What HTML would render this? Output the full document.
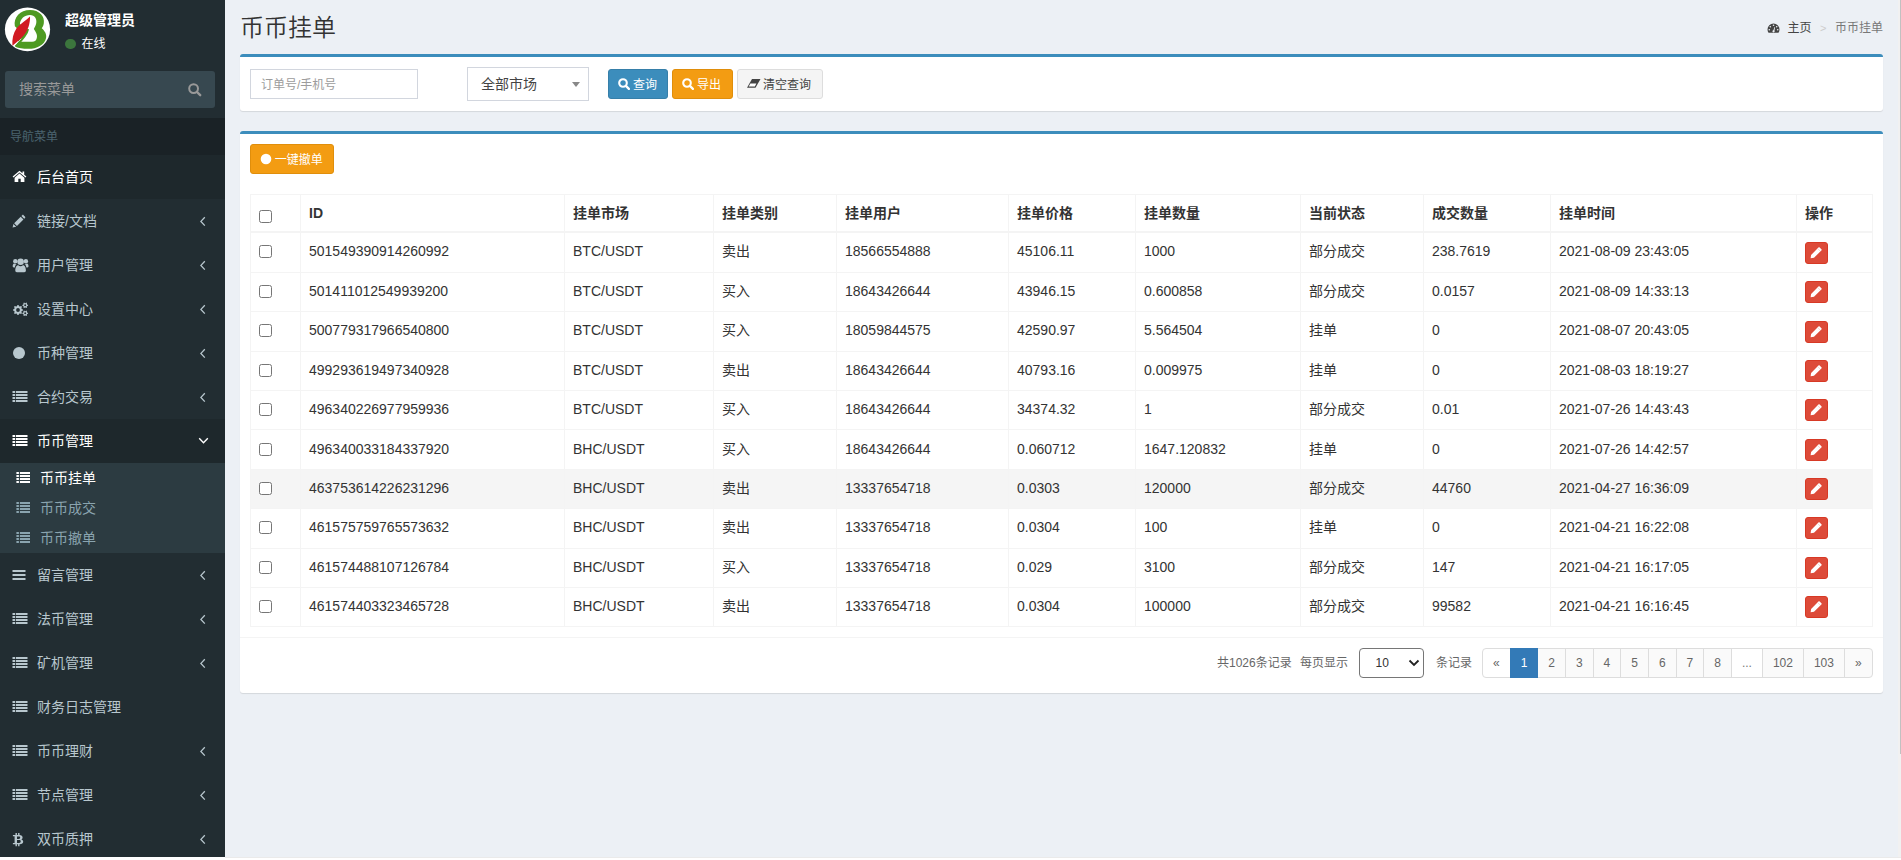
<!DOCTYPE html>
<html lang="zh-CN">
<head>
<meta charset="utf-8">
<title>币币挂单</title>
<style>
*{box-sizing:border-box;}
html,body{margin:0;padding:0;}
body{width:1901px;height:860px;overflow:hidden;background:#f0f0f0;position:relative;
 font-family:"Liberation Sans","Noto Sans CJK SC",sans-serif;font-size:14px;line-height:20px;color:#333;}
#frame{position:absolute;left:0;top:0;width:1898px;height:857px;background:#ecf0f5;overflow:hidden;}
#edge-r{position:absolute;left:1898px;top:0;width:3px;height:857px;background:#f1f1f1;}#thumb{position:absolute;left:1900px;top:0;width:1px;height:754px;background:#c1c1c1;}#seam{position:absolute;left:224px;top:0;width:2px;height:857px;border-left:1px solid #141c20;border-right:1px solid #fafcff;}
#edge-b{position:absolute;left:0;top:857px;width:1901px;height:3px;background:#fff;border-top:1px solid #eaeaea;}#edge-b i{position:absolute;left:0;top:-1px;width:225px;height:1px;background:#fff;}
/* sidebar */
#side{position:absolute;left:0;top:0;width:225px;height:857px;background:#222d32;color:#b8c7ce;}
#avatar{position:absolute;left:0;top:0;width:60px;height:60px;}
#uname{position:absolute;left:65px;top:10px;font-size:14px;font-weight:bold;color:#fff;line-height:20px;white-space:nowrap;}
#ustat{position:absolute;left:65px;top:36px;font-size:12px;color:#fff;line-height:16px;white-space:nowrap;}
#ustat i{display:inline-block;width:10.5px;height:10.5px;border-radius:50%;background:#3c763d;margin-right:6px;vertical-align:-1px;}
#search{position:absolute;left:5px;top:71px;width:210px;height:37px;border-radius:3px;background:#374850;}
#search span{position:absolute;left:14px;top:8px;font-size:14px;color:#999;line-height:20px;}
#search svg{position:absolute;left:183px;top:12px;}
#navhead{position:absolute;left:0;top:118px;width:225px;height:37px;background:#1a2226;color:#4b646f;font-size:12px;line-height:18px;padding:9.500px 0 0 10px;}
.mi{position:absolute;left:0;width:225px;height:44px;color:#b8c7ce;font-size:14px;}
.mi.on{background:#1e282c;color:#fff;}
.mi .t{position:absolute;left:37px;top:12px;line-height:20px;white-space:nowrap;}
.mi .ic{position:absolute;left:12px;top:14px;width:16px;height:16px;}
.mi .ar{position:absolute;left:199px;top:16px;width:8px;height:12px;}
#sub{position:absolute;left:0;top:463px;width:225px;height:90px;background:#2c3b41;}
.si{position:absolute;left:0;width:225px;height:30px;color:#8aa4af;font-size:14px;}
.si.on{color:#fff;}
.si .t{position:absolute;left:40px;top:5px;line-height:20px;white-space:nowrap;}
.si .ic{position:absolute;left:15.700px;top:7px;width:14.800px;height:14px;}
/* main */
h1{position:absolute;left:240px;top:10.500px;margin:0;font-size:24px;font-weight:350;line-height:34px;color:#333;white-space:nowrap;}
#crumb{position:absolute;left:1760px;top:19.200px;width:123px;height:18px;font-size:12px;line-height:18px;white-space:nowrap;}
#crumb span{position:absolute;top:0;}
.box{position:absolute;left:240px;width:1643px;background:#fff;border-top:3px solid #3c8dbc;border-radius:3px;box-shadow:0 1px 1px rgba(0,0,0,.1);}
#b1{top:54px;height:57px;}
#b2{top:131px;height:562px;}
.abs{position:absolute;}
#inp{left:250px;top:69px;width:168px;height:30px;border:1px solid #d2d6de;background:#fff;font-size:12px;line-height:18px;color:#9c9c9c;padding:5.500px 10px;}
#sel{left:467px;top:67px;width:122px;height:34px;border:1px solid #d2d6de;background:#fff;font-size:14px;line-height:20px;color:#444;padding:6px 0 0 13px;}
#sel i{position:absolute;left:104px;top:14px;width:0;height:0;border-left:4px solid transparent;border-right:4px solid transparent;border-top:5px solid #888;}
.btn{position:absolute;height:30px;border-radius:3px;font-size:12px;line-height:18px;color:#fff;border:1px solid transparent;white-space:nowrap;}
.btn span{position:absolute;top:5.600px;}
.btn svg{position:absolute;}
#bq{left:608px;top:69px;width:60px;background:#3c8dbc;border-color:#367fa9;}
#be{left:672px;top:69px;width:61px;background:#f39c12;border-color:#e08e0b;}
#bc{left:737px;top:69px;width:86px;background:#f4f4f4;border-color:#ddd;color:#444;}
#bx{left:250px;top:144px;width:84px;background:#f39c12;border-color:#e08e0b;}
/* table */
#tb{position:absolute;left:250px;top:194px;width:1622px;border-collapse:collapse;table-layout:fixed;font-size:14px;color:#333;}
#tb th,#tb td{border:1px solid #f4f4f4;padding:0 8px;text-align:left;vertical-align:middle;line-height:20px;white-space:nowrap;overflow:hidden;}
#tb th{font-weight:bold;border-bottom-width:2px;height:37.500px;padding-bottom:1px;}
#tb td{height:39.4px;padding-bottom:2px;}
#tb th.c{font-weight:700;}#tb tr.hv td{background:#f5f5f5;}#tb tr.r1 td{height:40.400px;}
.cb{display:block;width:13px;height:13px;border:1px solid #767676;border-radius:2.5px;background:#fff;margin:3px 0 0 0;position:relative;top:-1px;}
th .cb{margin-top:5px;top:1px;}
.eb{display:block;width:23px;height:22px;border-radius:3px;background:#dd4b39;border:1px solid #d73925;position:relative;margin-top:3px;}
.eb svg{position:absolute;left:5px;top:4px;}
#ftline{position:absolute;left:240px;top:637px;width:1643px;height:1px;background:#f4f4f4;}
.ft{position:absolute;top:654px;font-size:12px;line-height:18px;color:#666;white-space:nowrap;}
#psel{left:1359px;top:648px;width:65px;height:30px;border:1px solid #767676;border-radius:4px;background:#fff;font-size:12px;color:#333;line-height:18px;padding:5px 0 0 15.500px;}
#pag{position:absolute;left:1482px;top:648px;height:30px;display:flex;font-size:12px;line-height:18px;color:#666;}
#pag span{display:block;height:30px;border:1px solid #ddd;margin-left:-1px;background:#fafafa;text-align:center;padding-top:5px;}
#pag span:first-child{margin-left:0;border-radius:4px 0 0 4px;background:#fff;}
#pag span:last-child{border-radius:0 4px 4px 0;}
#pag span.on{background:#337ab7;border-color:#337ab7;color:#fff;position:relative;}
</style>
</head>
<body>
<div id="frame">
<div id="side">
 <div id="avatar"><svg width="60" height="60" viewBox="0 0 860 860"><ellipse cx="394" cy="422" rx="324" ry="313" fill="#fff"/><path d="M213 375C190 250 290 143 430 143C565 143 645 235 628 335C622 370 612 390 598 405C645 445 672 495 660 545C640 650 520 703 400 700C330 700 265 690 222 670L260 600L240 400Z" fill="#4e9a22"/><path d="M285 345C290 270 350 215 430 215C500 215 530 270 520 330C512 370 495 395 485 415C510 450 535 490 530 530C525 580 500 600 460 600L290 600L400 440Z" fill="#fff"/><path d="M402 418C392 480 340 550 222 668" fill="none" stroke="#4e9a22" stroke-width="30"/><path d="M305 555C270 590 235 625 198 662" fill="none" stroke="#fff" stroke-width="10"/><path d="M430 235C435 300 410 400 380 450C340 520 260 590 178 655C170 560 190 470 240 400C290 340 380 290 430 235Z" fill="#d11a22"/></svg></div>
 <div id="uname">超级管理员</div>
 <div id="ustat"><i></i>在线</div>
 <div id="search"><span>搜索菜单</span><svg width="14" height="14" viewBox="0 0 14 14"><circle cx="5.6" cy="5.6" r="4.4" fill="none" stroke="#999" stroke-width="2"/><path d="M9 9L12.2 12.2" stroke="#999" stroke-width="2.4" stroke-linecap="round"/></svg></div>
 <div id="navhead">导航菜单</div>
 <div class="mi on" style="top:155px"><svg class="ic" viewBox="0 0 16 16"><path d="M7.500 1.800L.6 7.600l.9 1L7.500 3.600l6 5 .9-1-2.200-1.900V2.500h-1.700v1.800z" fill="#fff"/><path d="M7.500 4.600L2.600 8.700V13h3.700V9.800h2.400V13h3.700V8.700z" fill="#fff"/></svg><span class="t">后台首页</span></div>
 <div class="mi" style="top:199px"><svg class="ic" viewBox="0 0 16 16"><path transform="translate(.3 1.400) scale(.93)" d="M.3 14.200l.9-3.900 3 3zM2 9.500l7-7 3 3-7 7zM9.800 1.700l.9-.9c.4-.4 1-.4 1.400 0l1.600 1.600c.4.400.4 1 0 1.400l-.9.900z" fill="#b8c7ce"/></svg><span class="t">链接/文档</span><svg class="ar" viewBox="0 0 8 12"><path d="M5.800 2.200L1.900 6.400l3.900 4.200" fill="none" stroke="#b8c7ce" stroke-width="1.300"/></svg></div>
 <div class="mi" style="top:243px"><svg class="ic" viewBox="0 0 16 16" style="overflow:visible"><circle cx="8.600" cy="4.800" r="3.300" fill="#b8c7ce"/><path d="M4.900 15.200c-1 0-1.600-.6-1.600-1.600 0-2.600.8-5.300 3-5.300.6.600 1.400.9 2.300.9s1.700-.3 2.300-.9c2.200 0 3 2.700 3 5.300 0 1-.6 1.600-1.600 1.600z" fill="#b8c7ce"/><circle cx="3.300" cy="4.300" r="2.200" fill="#b8c7ce"/><circle cx="13.900" cy="4.300" r="2.200" fill="#b8c7ce"/><path d="M.7 9.600c0-1.600.4-3 1.600-3 .6.500 1.400.7 2.200.5-.9.800-1.500 1.900-1.700 3.300H1.700c-.6 0-1-.3-1-.8zM16.500 9.600c0-1.600-.4-3-1.600-3-.6.500-1.400.7-2.200.5.900.8 1.500 1.900 1.700 3.300h1.100c.6 0 1-.3 1-.8z" fill="#b8c7ce"/></svg><span class="t">用户管理</span><svg class="ar" viewBox="0 0 8 12"><path d="M5.800 2.200L1.900 6.400l3.900 4.200" fill="none" stroke="#b8c7ce" stroke-width="1.300"/></svg></div>
 <div class="mi" style="top:287px"><svg class="ic" viewBox="0 0 16 16" style="overflow:visible"><path fill-rule="evenodd" d="M10.97 8.46L10.97 9.54L9.74 10.10L9.42 10.87L9.90 12.13L9.13 12.90L7.87 12.42L7.10 12.74L6.54 13.97L5.46 13.97L4.90 12.74L4.13 12.42L2.87 12.90L2.10 12.13L2.58 10.87L2.26 10.10L1.03 9.54L1.03 8.46L2.26 7.90L2.58 7.13L2.10 5.87L2.87 5.10L4.13 5.58L4.90 5.26L5.46 4.03L6.54 4.03L7.10 5.26L7.87 5.58L9.13 5.10L9.90 5.87L9.42 7.13L9.74 7.90ZM4.10 9.00a1.90 1.90 0 1 0 3.80 0a1.90 1.90 0 1 0 -3.80 0Z" fill="#b8c7ce"/><path fill-rule="evenodd" d="M16.07 3.88L16.07 4.72L15.15 5.08L14.85 5.60L15.00 6.58L14.27 6.99L13.50 6.38L12.90 6.38L12.13 6.99L11.40 6.58L11.55 5.60L11.25 5.08L10.33 4.72L10.33 3.88L11.25 3.52L11.55 3.00L11.40 2.02L12.13 1.61L12.90 2.22L13.50 2.22L14.27 1.61L15.00 2.02L14.85 3.00L15.15 3.52ZM12.20 4.30a1.00 1.00 0 1 0 2.00 0a1.00 1.00 0 1 0 -2.00 0Z" fill="#b8c7ce"/><path fill-rule="evenodd" d="M16.07 11.88L16.07 12.72L15.15 13.08L14.85 13.60L15.00 14.58L14.27 14.99L13.50 14.38L12.90 14.38L12.13 14.99L11.40 14.58L11.55 13.60L11.25 13.08L10.33 12.72L10.33 11.88L11.25 11.52L11.55 11.00L11.40 10.02L12.13 9.61L12.90 10.22L13.50 10.22L14.27 9.61L15.00 10.02L14.85 11.00L15.15 11.52ZM12.20 12.30a1.00 1.00 0 1 0 2.00 0a1.00 1.00 0 1 0 -2.00 0Z" fill="#b8c7ce"/></svg><span class="t">设置中心</span><svg class="ar" viewBox="0 0 8 12"><path d="M5.800 2.200L1.900 6.400l3.900 4.200" fill="none" stroke="#b8c7ce" stroke-width="1.300"/></svg></div>
 <div class="mi" style="top:331px"><svg class="ic" viewBox="0 0 16 16"><circle cx="7" cy="8" r="6" fill="#b8c7ce"/></svg><span class="t">币种管理</span><svg class="ar" viewBox="0 0 8 12"><path d="M5.800 2.200L1.900 6.400l3.900 4.200" fill="none" stroke="#b8c7ce" stroke-width="1.300"/></svg></div>
 <div class="mi" style="top:375px"><svg class="ic" viewBox="0 0 16 16"><path d="M.5 2h2.500v2H.5zM3.800 2H15.500v2H3.800zM.5 5h2.500v2H.5zM3.800 5H15.500v2H3.800zM.5 8h2.500v2H.5zM3.800 8H15.500v2H3.800zM.5 11h2.500v2H.5zM3.800 11H15.500v2H3.800z" fill="#b8c7ce"/></svg><span class="t">合约交易</span><svg class="ar" viewBox="0 0 8 12"><path d="M5.800 2.200L1.900 6.400l3.900 4.200" fill="none" stroke="#b8c7ce" stroke-width="1.300"/></svg></div>
 <div class="mi on" style="top:419px"><svg class="ic" viewBox="0 0 16 16"><path d="M.5 2h2.500v2H.5zM3.800 2H15.500v2H3.800zM.5 5h2.500v2H.5zM3.800 5H15.500v2H3.800zM.5 8h2.500v2H.5zM3.800 8H15.500v2H3.800zM.5 11h2.500v2H.5zM3.800 11H15.500v2H3.800z" fill="#fff"/></svg><span class="t">币币管理</span><svg class="ar" viewBox="0 0 11 8" style="left:198px;top:18px;width:11px;height:8px"><path d="M1.200 1.300L5.500 5.700L9.800 1.300" fill="none" stroke="#fff" stroke-width="1.400"/></svg></div>
 <div id="sub">
  <div class="si on" style="top:0"><svg class="ic" viewBox="0 0 14 14"><path d="M0 2h2.500v2H0zM3.500 2H14v2H3.500zM0 5h2.500v2H0zM3.500 5H14v2H3.500zM0 8h2.500v2H0zM3.500 8H14v2H3.500zM0 11h2.500v2H0zM3.500 11H14v2H3.500z" fill="#fff"/></svg><span class="t">币币挂单</span></div>
  <div class="si" style="top:30px"><svg class="ic" viewBox="0 0 14 14"><path d="M0 2h2.500v2H0zM3.500 2H14v2H3.500zM0 5h2.500v2H0zM3.500 5H14v2H3.500zM0 8h2.500v2H0zM3.500 8H14v2H3.500zM0 11h2.500v2H0zM3.500 11H14v2H3.500z" fill="#8aa4af"/></svg><span class="t">币币成交</span></div>
  <div class="si" style="top:60px"><svg class="ic" viewBox="0 0 14 14"><path d="M0 2h2.500v2H0zM3.500 2H14v2H3.500zM0 5h2.500v2H0zM3.500 5H14v2H3.500zM0 8h2.500v2H0zM3.500 8H14v2H3.500zM0 11h2.500v2H0zM3.500 11H14v2H3.500z" fill="#8aa4af"/></svg><span class="t">币币撤单</span></div>
 </div>
 <div class="mi" style="top:553px"><svg class="ic" viewBox="0 0 16 16"><path d="M.5 3h13v2H.5zM.5 7h13v2H.5zM.5 11h13v2H.5z" fill="#b8c7ce"/></svg><span class="t">留言管理</span><svg class="ar" viewBox="0 0 8 12"><path d="M5.800 2.200L1.900 6.400l3.900 4.200" fill="none" stroke="#b8c7ce" stroke-width="1.300"/></svg></div>
 <div class="mi" style="top:597px"><svg class="ic" viewBox="0 0 16 16"><path d="M.5 2h2.500v2H.5zM3.800 2H15.500v2H3.800zM.5 5h2.500v2H.5zM3.800 5H15.500v2H3.800zM.5 8h2.500v2H.5zM3.800 8H15.500v2H3.800zM.5 11h2.500v2H.5zM3.800 11H15.500v2H3.800z" fill="#b8c7ce"/></svg><span class="t">法币管理</span><svg class="ar" viewBox="0 0 8 12"><path d="M5.800 2.200L1.900 6.400l3.900 4.200" fill="none" stroke="#b8c7ce" stroke-width="1.300"/></svg></div>
 <div class="mi" style="top:641px"><svg class="ic" viewBox="0 0 16 16"><path d="M.5 2h2.500v2H.5zM3.800 2H15.500v2H3.800zM.5 5h2.500v2H.5zM3.800 5H15.500v2H3.800zM.5 8h2.500v2H.5zM3.800 8H15.500v2H3.800zM.5 11h2.500v2H.5zM3.800 11H15.500v2H3.800z" fill="#b8c7ce"/></svg><span class="t">矿机管理</span><svg class="ar" viewBox="0 0 8 12"><path d="M5.800 2.200L1.900 6.400l3.900 4.200" fill="none" stroke="#b8c7ce" stroke-width="1.300"/></svg></div>
 <div class="mi" style="top:685px"><svg class="ic" viewBox="0 0 16 16"><path d="M.5 2h2.500v2H.5zM3.800 2H15.500v2H3.800zM.5 5h2.500v2H.5zM3.800 5H15.500v2H3.800zM.5 8h2.500v2H.5zM3.800 8H15.500v2H3.800zM.5 11h2.500v2H.5zM3.800 11H15.500v2H3.800z" fill="#b8c7ce"/></svg><span class="t">财务日志管理</span></div>
 <div class="mi" style="top:729px"><svg class="ic" viewBox="0 0 16 16"><path d="M.5 2h2.500v2H.5zM3.800 2H15.500v2H3.800zM.5 5h2.500v2H.5zM3.800 5H15.500v2H3.800zM.5 8h2.500v2H.5zM3.800 8H15.500v2H3.800zM.5 11h2.500v2H.5zM3.800 11H15.500v2H3.800z" fill="#b8c7ce"/></svg><span class="t">币币理财</span><svg class="ar" viewBox="0 0 8 12"><path d="M5.800 2.200L1.900 6.400l3.900 4.200" fill="none" stroke="#b8c7ce" stroke-width="1.300"/></svg></div>
 <div class="mi" style="top:773px"><svg class="ic" viewBox="0 0 16 16"><path d="M.5 2h2.500v2H.5zM3.800 2H15.500v2H3.800zM.5 5h2.500v2H.5zM3.800 5H15.500v2H3.800zM.5 8h2.500v2H.5zM3.800 8H15.500v2H3.800zM.5 11h2.500v2H.5zM3.800 11H15.500v2H3.800z" fill="#b8c7ce"/></svg><span class="t">节点管理</span><svg class="ar" viewBox="0 0 8 12"><path d="M5.800 2.200L1.900 6.400l3.900 4.200" fill="none" stroke="#b8c7ce" stroke-width="1.300"/></svg></div>
 <div class="mi" style="top:817px"><svg class="ic" viewBox="0 0 16 16"><path fill-rule="evenodd" d="M.9 4H7.500C9.500 4 10.600 5 10.600 6.400C10.600 7.400 10 8.100 9.200 8.400C10.400 8.700 11.200 9.600 11.200 10.800C11.200 12.400 9.900 13.200 7.800 13.200H.9V11.900H2.600V5.300H.9ZM5 5.400V7.900H6.900C7.800 7.900 8.200 7.400 8.200 6.600C8.200 5.800 7.800 5.400 6.900 5.400ZM5 9.100V11.900H7.200C8.200 11.900 8.700 11.400 8.700 10.500C8.700 9.600 8.200 9.100 7.200 9.100ZM3.500 2h1.400v2H3.500zM6.100 2h1.400v2H6.100zM3.500 13.200h1.400v2.100H3.500zM6.100 13.200h1.400v2.100H6.100z" fill="#b8c7ce"/></svg><span class="t">双币质押</span><svg class="ar" viewBox="0 0 8 12"><path d="M5.800 2.200L1.900 6.400l3.900 4.200" fill="none" stroke="#b8c7ce" stroke-width="1.300"/></svg></div>
</div>

<h1>币币挂单</h1>
<div id="crumb"><svg class="abs" style="left:6.500px;top:2.800px" width="13" height="12" viewBox="0 0 13 12"><path d="M6.500 1.500A6 6 0 0 0 .5 7.500c0 1.200.4 2.400 1 3.300h10c.6-.9 1-2.100 1-3.300a6 6 0 0 0-6-6z" fill="#444"/><circle cx="6.500" cy="3.300" r=".8" fill="#ecf0f5"/><circle cx="3.300" cy="4.700" r=".8" fill="#ecf0f5"/><circle cx="9.700" cy="4.700" r=".8" fill="#ecf0f5"/><circle cx="2.300" cy="7.700" r=".8" fill="#ecf0f5"/><circle cx="10.700" cy="7.700" r=".8" fill="#ecf0f5"/><path d="M6 9.500L7.500 5l.6.200L7.200 9.800z" fill="#ecf0f5"/><circle cx="6.500" cy="9.300" r="1.100" fill="#ecf0f5"/></svg><span style="left:27.500px;color:#444">主页</span><span style="left:60px;color:#ccc;font-size:11px">&gt;</span><span style="left:75px;color:#777">币币挂单</span></div>
<div class="box" id="b1"></div>
<div class="abs" id="inp">订单号/手机号</div>
<div class="abs" id="sel">全部市场<i></i></div>
<div class="btn" id="bq"><svg width="12" height="12" viewBox="0 0 12 12" style="left:9px;top:8.200px"><circle cx="5" cy="5" r="3.800" fill="none" stroke="#fff" stroke-width="2.100"/><path d="M7.900 7.900L10.900 10.900" stroke="#fff" stroke-width="2.300" stroke-linecap="round"/></svg><span style="left:24px">查询</span></div>
<div class="btn" id="be"><svg width="12" height="12" viewBox="0 0 12 12" style="left:9px;top:8.200px"><circle cx="5" cy="5" r="3.800" fill="none" stroke="#fff" stroke-width="2.100"/><path d="M7.900 7.900L10.900 10.900" stroke="#fff" stroke-width="2.300" stroke-linecap="round"/></svg><span style="left:24px">导出</span></div>
<div class="btn" id="bc"><svg width="14" height="9" viewBox="0 0 14 9" style="left:9px;top:9.300px"><path d="M5 0H13.500L8.500 8.700H0z" fill="#444"/><path d="M3.400 4.600H9.400L7.800 7.500H1.700z" fill="#fff"/></svg><span style="left:25px">清空查询</span></div>
<div class="box" id="b2"></div>
<div class="btn" id="bx"><svg width="12" height="12" viewBox="0 0 12 12" style="left:9px;top:8px"><circle cx="6" cy="6" r="5.300" fill="#fff"/></svg><span style="left:23.800px">一键撤单</span></div>
<table id="tb"><colgroup><col style="width:50px"><col style="width:264px"><col style="width:149px"><col style="width:123px"><col style="width:172px"><col style="width:127px"><col style="width:165px"><col style="width:123px"><col style="width:127px"><col style="width:246px"><col style="width:76px"></colgroup>
<thead><tr><th><i class="cb"></i></th><th>ID</th><th class="c">挂单市场</th><th class="c">挂单类别</th><th class="c">挂单用户</th><th class="c">挂单价格</th><th class="c">挂单数量</th><th class="c">当前状态</th><th class="c">成交数量</th><th class="c">挂单时间</th><th class="c">操作</th></tr></thead><tbody>
<tr class="r1"><td><i class="cb"></i></td><td>501549390914260992</td><td>BTC/USDT</td><td>卖出</td><td>18566554888</td><td>45106.11</td><td>1000</td><td>部分成交</td><td>238.7619</td><td>2021-08-09 23:43:05</td><td><i class="eb"><svg width="12" height="12" viewBox="0 0 12 12" style="overflow:visible"><path d="M-.4 11.300L.1 7.900L7.700 .3Q8.050 -.05 8.400 .3L10.600 2.500Q10.950 2.850 10.600 3.200L3 10.800Z" fill="#fff"/><path d="M6.800 1.700L9.300 4.200" stroke="#eda196" stroke-width=".45" fill="none"/></svg></i></td></tr>
<tr><td><i class="cb"></i></td><td>501411012549939200</td><td>BTC/USDT</td><td>买入</td><td>18643426644</td><td>43946.15</td><td>0.600858</td><td>部分成交</td><td>0.0157</td><td>2021-08-09 14:33:13</td><td><i class="eb" style="top:-1px"><svg width="12" height="12" viewBox="0 0 12 12" style="overflow:visible"><path d="M-.4 11.300L.1 7.900L7.700 .3Q8.050 -.05 8.400 .3L10.600 2.500Q10.950 2.850 10.600 3.200L3 10.800Z" fill="#fff"/><path d="M6.800 1.700L9.300 4.200" stroke="#eda196" stroke-width=".45" fill="none"/></svg></i></td></tr>
<tr><td><i class="cb"></i></td><td>500779317966540800</td><td>BTC/USDT</td><td>买入</td><td>18059844575</td><td>42590.97</td><td>5.564504</td><td>挂单</td><td>0</td><td>2021-08-07 20:43:05</td><td><i class="eb"><svg width="12" height="12" viewBox="0 0 12 12" style="overflow:visible"><path d="M-.4 11.300L.1 7.900L7.700 .3Q8.050 -.05 8.400 .3L10.600 2.500Q10.950 2.850 10.600 3.200L3 10.800Z" fill="#fff"/><path d="M6.800 1.700L9.300 4.200" stroke="#eda196" stroke-width=".45" fill="none"/></svg></i></td></tr>
<tr><td><i class="cb"></i></td><td>499293619497340928</td><td>BTC/USDT</td><td>卖出</td><td>18643426644</td><td>40793.16</td><td>0.009975</td><td>挂单</td><td>0</td><td>2021-08-03 18:19:27</td><td><i class="eb"><svg width="12" height="12" viewBox="0 0 12 12" style="overflow:visible"><path d="M-.4 11.300L.1 7.900L7.700 .3Q8.050 -.05 8.400 .3L10.600 2.500Q10.950 2.850 10.600 3.200L3 10.800Z" fill="#fff"/><path d="M6.800 1.700L9.300 4.200" stroke="#eda196" stroke-width=".45" fill="none"/></svg></i></td></tr>
<tr><td><i class="cb"></i></td><td>496340226977959936</td><td>BTC/USDT</td><td>买入</td><td>18643426644</td><td>34374.32</td><td>1</td><td>部分成交</td><td>0.01</td><td>2021-07-26 14:43:43</td><td><i class="eb" style="top:-1px"><svg width="12" height="12" viewBox="0 0 12 12" style="overflow:visible"><path d="M-.4 11.300L.1 7.900L7.700 .3Q8.050 -.05 8.400 .3L10.600 2.500Q10.950 2.850 10.600 3.200L3 10.800Z" fill="#fff"/><path d="M6.800 1.700L9.300 4.200" stroke="#eda196" stroke-width=".45" fill="none"/></svg></i></td></tr>
<tr><td><i class="cb"></i></td><td>496340033184337920</td><td>BHC/USDT</td><td>买入</td><td>18643426644</td><td>0.060712</td><td>1647.120832</td><td>挂单</td><td>0</td><td>2021-07-26 14:42:57</td><td><i class="eb"><svg width="12" height="12" viewBox="0 0 12 12" style="overflow:visible"><path d="M-.4 11.300L.1 7.900L7.700 .3Q8.050 -.05 8.400 .3L10.600 2.500Q10.950 2.850 10.600 3.200L3 10.800Z" fill="#fff"/><path d="M6.800 1.700L9.300 4.200" stroke="#eda196" stroke-width=".45" fill="none"/></svg></i></td></tr>
<tr class="hv"><td><i class="cb"></i></td><td>463753614226231296</td><td>BHC/USDT</td><td>卖出</td><td>13337654718</td><td>0.0303</td><td>120000</td><td>部分成交</td><td>44760</td><td>2021-04-27 16:36:09</td><td><i class="eb" style="top:-1px"><svg width="12" height="12" viewBox="0 0 12 12" style="overflow:visible"><path d="M-.4 11.300L.1 7.900L7.700 .3Q8.050 -.05 8.400 .3L10.600 2.500Q10.950 2.850 10.600 3.200L3 10.800Z" fill="#fff"/><path d="M6.800 1.700L9.300 4.200" stroke="#eda196" stroke-width=".45" fill="none"/></svg></i></td></tr>
<tr><td><i class="cb"></i></td><td>461575759765573632</td><td>BHC/USDT</td><td>卖出</td><td>13337654718</td><td>0.0304</td><td>100</td><td>挂单</td><td>0</td><td>2021-04-21 16:22:08</td><td><i class="eb" style="top:-1px"><svg width="12" height="12" viewBox="0 0 12 12" style="overflow:visible"><path d="M-.4 11.300L.1 7.900L7.700 .3Q8.050 -.05 8.400 .3L10.600 2.500Q10.950 2.850 10.600 3.200L3 10.800Z" fill="#fff"/><path d="M6.800 1.700L9.300 4.200" stroke="#eda196" stroke-width=".45" fill="none"/></svg></i></td></tr>
<tr><td><i class="cb"></i></td><td>461574488107126784</td><td>BHC/USDT</td><td>买入</td><td>13337654718</td><td>0.029</td><td>3100</td><td>部分成交</td><td>147</td><td>2021-04-21 16:17:05</td><td><i class="eb"><svg width="12" height="12" viewBox="0 0 12 12" style="overflow:visible"><path d="M-.4 11.300L.1 7.900L7.700 .3Q8.050 -.05 8.400 .3L10.600 2.500Q10.950 2.850 10.600 3.200L3 10.800Z" fill="#fff"/><path d="M6.800 1.700L9.300 4.200" stroke="#eda196" stroke-width=".45" fill="none"/></svg></i></td></tr>
<tr><td><i class="cb"></i></td><td>461574403323465728</td><td>BHC/USDT</td><td>卖出</td><td>13337654718</td><td>0.0304</td><td>100000</td><td>部分成交</td><td>99582</td><td>2021-04-21 16:16:45</td><td><i class="eb" style="top:-1px"><svg width="12" height="12" viewBox="0 0 12 12" style="overflow:visible"><path d="M-.4 11.300L.1 7.900L7.700 .3Q8.050 -.05 8.400 .3L10.600 2.500Q10.950 2.850 10.600 3.200L3 10.800Z" fill="#fff"/><path d="M6.800 1.700L9.300 4.200" stroke="#eda196" stroke-width=".45" fill="none"/></svg></i></td></tr>
</tbody></table>
<div id="ftline"></div>
<div class="ft" style="left:1217px">共1026条记录</div>
<div class="ft" style="left:1300px">每页显示</div>
<div class="abs" id="psel">10<svg class="abs" style="left:48px;top:9px" width="12" height="10" viewBox="0 0 12 10"><path d="M1.500 2.500L6 7l4.500-4.500" fill="none" stroke="#222" stroke-width="1.800"/></svg></div>
<div class="ft" style="left:1436px">条记录</div>
<div id="pag"><span class="" style="width:28.67px">«</span><span class="on" style="width:28.67px">1</span><span class="" style="width:28.67px">2</span><span class="" style="width:28.67px">3</span><span class="" style="width:28.67px">4</span><span class="" style="width:28.67px">5</span><span class="" style="width:28.67px">6</span><span class="" style="width:28.67px">7</span><span class="" style="width:28.67px">8</span><span class="" style="width:32.00px;background:#fff;color:#777">...</span><span class="" style="width:42.00px">102</span><span class="" style="width:42.00px">103</span><span class="" style="width:28.67px">»</span></div>
</div>
<div id="edge-r"></div>
<div id="edge-b"><i></i></div>
<div id="thumb"></div>

</body>
</html>
